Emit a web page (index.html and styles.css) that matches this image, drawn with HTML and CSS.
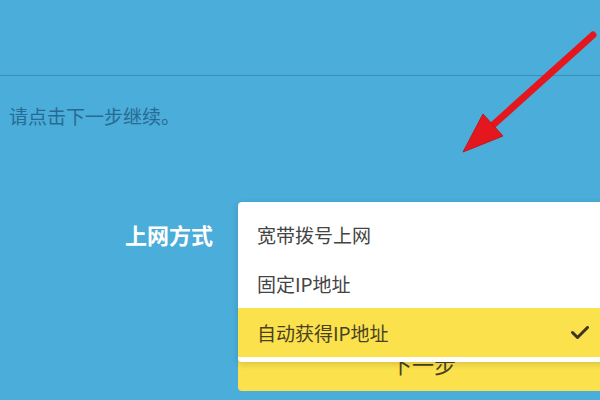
FILE: index.html
```html
<!DOCTYPE html>
<html lang="zh-CN">
<head>
<meta charset="UTF-8" />
<meta name="viewport" content="width=device-width, initial-scale=1" />
<title>上网设置</title>
<link rel="stylesheet" href="styles.css">
</head>
<body>

<div class="header"></div>

<p class="hint">请点击下一步继续。</p>

<div class="form-row">
  <div class="label">上网方式</div>
  <div class="field">
    <div class="select"></div>

    <!-- opened dropdown menu -->
    <ul class="menu">
      <li class="option">宽带拨号上网</li>
      <li class="option">固定IP地址</li>
      <li class="option selected">自动获得IP地址
        <svg class="check" width="20" height="14" viewBox="0 0 20 14">
          <path d="M2.5 6.5 L7.5 11.5 L17.5 1.5" fill="none" stroke="#3b3323" stroke-width="3" stroke-linecap="round" stroke-linejoin="round"/>
        </svg>
      </li>
    </ul>

    <button class="next">下一步</button>
  </div>
</div>

<!-- annotation arrow -->
<svg class="arrow" width="600" height="400" viewBox="0 0 600 400">
  <line x1="593" y1="35" x2="493" y2="125" stroke="#e3171d" stroke-width="7" stroke-linecap="round"/>
  <polygon points="463,152 483,114 503,136" fill="#e3171d" stroke="#c8141a" stroke-width="1" stroke-linejoin="round"/>
</svg>

</body>
</html>
```

FILE: styles.css
```css
body {
  margin: 0;
  background: #4badd9;
  font-family: "Noto Sans CJK SC", sans-serif;
  width: 600px;
  height: 400px;
  overflow: hidden;
  position: relative;
}
.header {
  height: 75px;
  border-bottom: 1px solid #3a8fba;
}
.hint {
  margin: 28px 0 0 9px;
  font-size: 19px;
  line-height: 24px;
  color: #276a93;
}
.form-row {
  display: flex;
  gap: 25px;
  margin-top: 82px;
}
.label {
  width: 213px;
  flex-shrink: 0;
  text-align: right;
  font-size: 22px;
  font-weight: bold;
  line-height: 49px;
  color: #fff;
}
.field {
  position: relative;
  width: 370px;
  flex-shrink: 0;
}
.select {
  height: 49px;
  background: #fff;
  border-radius: 4px;
}
.menu {
  position: absolute;
  top: -8px;
  left: 0;
  right: 0;
  margin: 0;
  padding: 8px 0 5px;
  list-style: none;
  background: #fff;
  border-radius: 4px;
  box-shadow: 0 2px 6px rgba(0,0,0,0.15);
  z-index: 2;
}
.option {
  display: flex;
  align-items: center;
  justify-content: space-between;
  height: 49px;
  padding: 0 18px 0 19px;
  font-size: 19px;
  color: #444;
}
.option.selected {
  background: #fbe14c;
  color: #4a4122;
}
.next {
  display: block;
  width: 100%;
  height: 56px;
  margin-top: 76px;
  padding: 0;
  border: none;
  border-radius: 4px;
  background: #fbe14c;
  font-family: inherit;
  font-size: 22px;
  color: #4a4122;
}
.arrow {
  position: absolute;
  top: 0;
  left: 0;
  pointer-events: none;
  z-index: 3;
}
```
